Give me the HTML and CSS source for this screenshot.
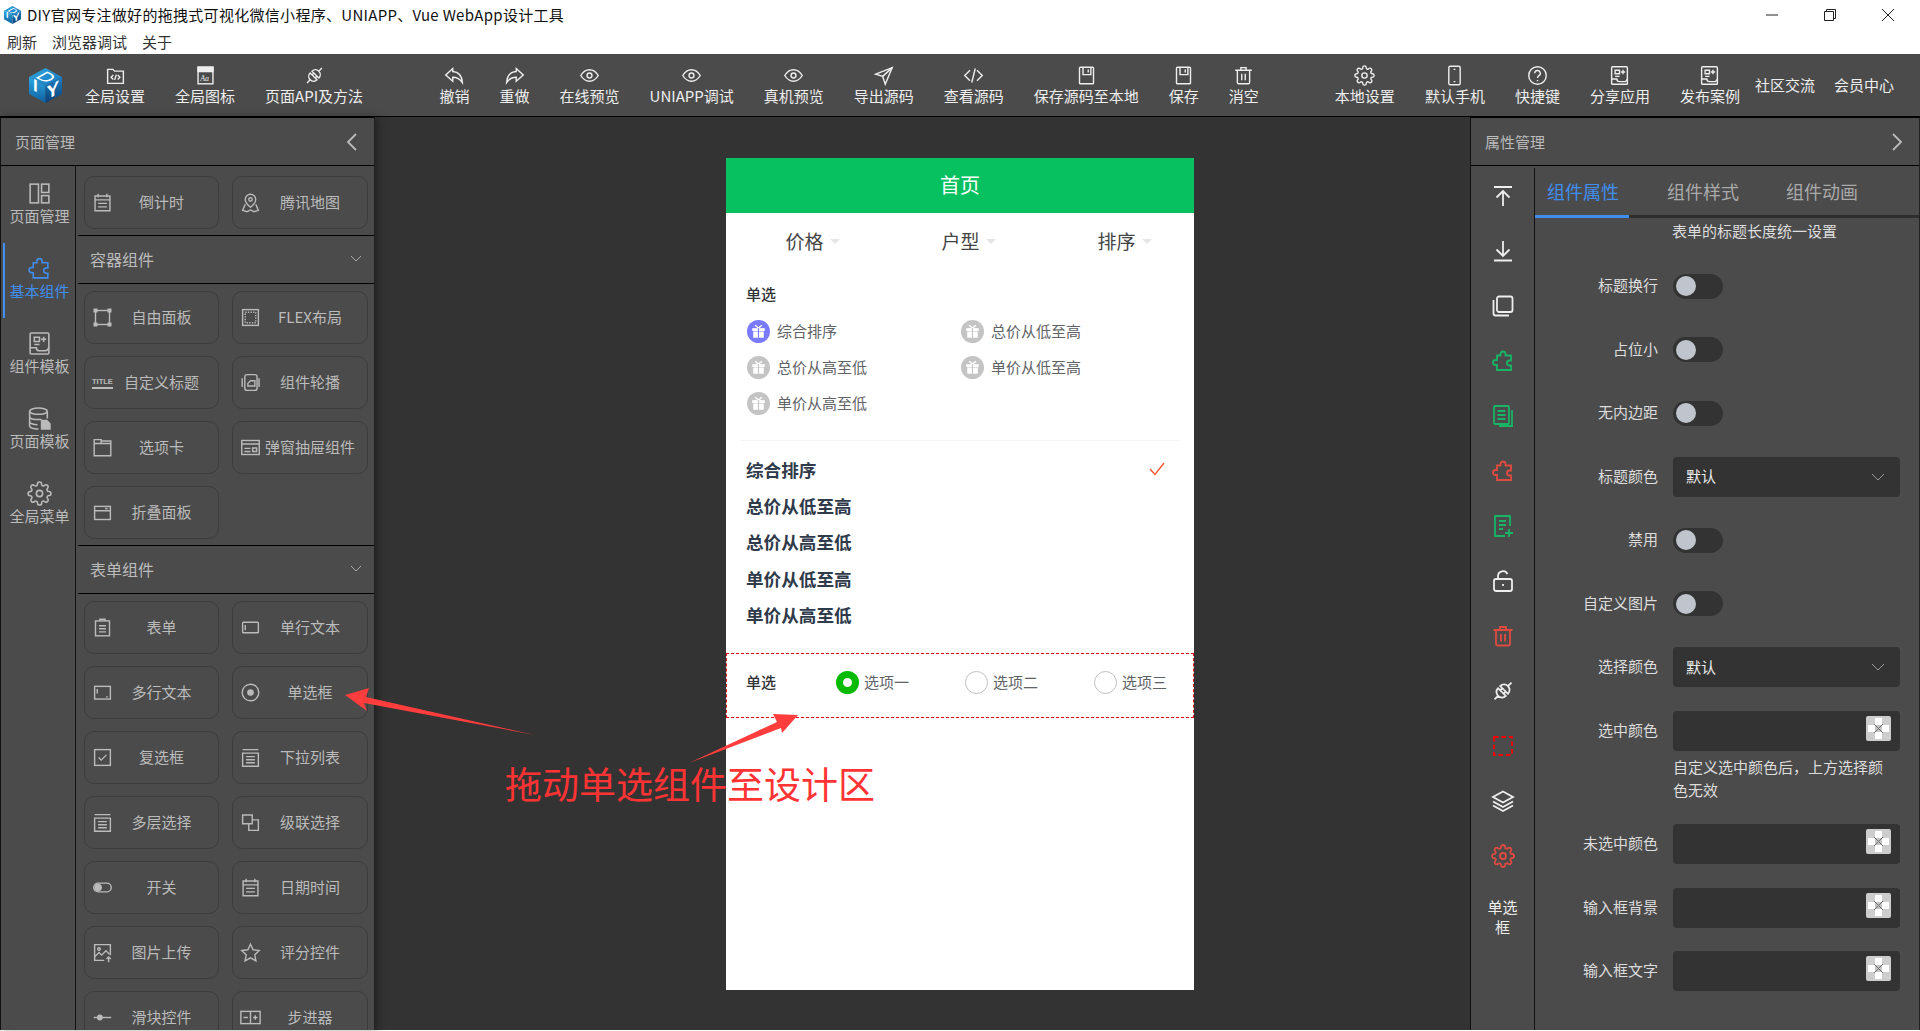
FILE: index.html
```html
<!DOCTYPE html>
<html lang="en">
<head>
    <meta charset="UTF-8">
    <meta name="viewport" content="width=device-width, initial-scale=1.0">
    <title>DIY官网专注做好的拖拽式可视化微信小程序、UNIAPP、Vue WebApp设计工具</title>
    <link rel="stylesheet" href="styles.css">
</head>
<body>
    <svg class="sprite" xmlns="http://www.w3.org/2000/svg">
        <defs>
            <linearGradient id="cubeTop" x1="0" y1="0" x2="1" y2="1"><stop offset="0" stop-color="#2fa6e2"/><stop offset="1" stop-color="#1678bb"/></linearGradient>
            <linearGradient id="cubeLeft" x1="0" y1="0" x2="0" y2="1"><stop offset="0" stop-color="#2ca8e4"/><stop offset="1" stop-color="#0f5f9e"/></linearGradient>
            <linearGradient id="cubeRight" x1="0" y1="0" x2="0" y2="1"><stop offset="0" stop-color="#1b7fc4"/><stop offset="1" stop-color="#0a3f74"/></linearGradient>
        </defs>
        <symbol id="i-folder" viewBox="0 0 24 24"><path d="M3 5h6l2 2h10v14H3z"/><path d="M9.500 11.500L7 14l2.500 2.500M14.500 11.500L17 14l-2.500 2.500M13 11l-2 6"/></symbol>
        <symbol id="i-plug" viewBox="0 0 24 24"><g transform="rotate(-45 12 12)"><path d="M10.500 6.500a5.500 5.500 0 0 0 0 11zM5 12H0M13.500 6.500a5.500 5.500 0 0 1 0 11zM19 12h5M13.500 9.500h-3M13.500 14.500h-3"/></g></symbol>
        <symbol id="i-undo" viewBox="0 0 24 24"><path d="M10 4L2 11.500 10 18.500v-4.500c5 0 8 1.500 11 6-.5-7-4-12-11-12.500z"/></symbol>
        <symbol id="i-redo" viewBox="0 0 24 24"><path d="M14 4l8 7.500-8 7v-4.500c-5 0-8 1.500-11 6 .5-7 4-12 11-12.500z"/></symbol>
        <symbol id="i-eye" viewBox="0 0 24 24"><path d="M2 12s4-6.500 10-6.500S22 12 22 12s-4 6.500-10 6.500S2 12 2 12z"/><circle cx="12" cy="12" r="2.800"/></symbol>
        <symbol id="i-send" viewBox="0 0 24 24"><path d="M22 3L3 10.500l8 2.500 3 9z"/><path d="M22 3L11 13"/></symbol>
        <symbol id="i-code" viewBox="0 0 24 24"><path d="M8 6l-6 6 6 6M16 6l6 6-6 6M14 4l-4 16"/></symbol>
        <symbol id="i-save" viewBox="0 0 24 24"><rect x="4" y="2.500" width="16" height="19" rx="1"/><path d="M8 2.500V11h9V2.500M14 5v3.500"/></symbol>
        <symbol id="i-trash" viewBox="0 0 24 24"><path d="M2.500 6h19M9 6V3h6v3M5 6v14a1.500 1.500 0 0 0 1.500 1.500h11A1.500 1.500 0 0 0 19 20V6M10 10v7.500M14 10v7.500"/></symbol>
        <symbol id="i-gear" viewBox="0 0 24 24"><circle cx="12" cy="12" r="3"/><path d="M19.400 15a1.650 1.650 0 0 0 .33 1.820l.06.06a2 2 0 0 1 0 2.830 2 2 0 0 1-2.830 0l-.06-.06a1.650 1.650 0 0 0-1.820-.33 1.650 1.650 0 0 0-1 1.510V21a2 2 0 0 1-2 2 2 2 0 0 1-2-2v-.09A1.650 1.650 0 0 0 9 19.400a1.650 1.650 0 0 0-1.820.33l-.06.06a2 2 0 0 1-2.830 0 2 2 0 0 1 0-2.830l.06-.06a1.650 1.650 0 0 0 .33-1.820 1.650 1.650 0 0 0-1.510-1H3a2 2 0 0 1-2-2 2 2 0 0 1 2-2h.09A1.650 1.650 0 0 0 4.600 9a1.650 1.650 0 0 0-.33-1.820l-.06-.06a2 2 0 0 1 0-2.830 2 2 0 0 1 2.830 0l.06.06a1.650 1.650 0 0 0 1.820.33H9a1.650 1.650 0 0 0 1-1.510V3a2 2 0 0 1 2-2 2 2 0 0 1 2 2v.09a1.650 1.650 0 0 0 1 1.510 1.650 1.650 0 0 0 1.820-.33l.06-.06a2 2 0 0 1 2.830 0 2 2 0 0 1 0 2.830l-.06.06a1.650 1.650 0 0 0-.33 1.820V9a1.650 1.650 0 0 0 1.510 1H21a2 2 0 0 1 2 2 2 2 0 0 1-2 2h-.09a1.650 1.650 0 0 0-1.510 1z"/></symbol>
        <symbol id="i-phone" viewBox="0 0 24 24"><rect x="5.500" y="1.500" width="13" height="21" rx="1.500"/><path d="M11 5h2M11 19h2"/></symbol>
        <symbol id="i-help" viewBox="0 0 24 24"><circle cx="12" cy="12" r="10"/><path d="M8.800 9.500a3.200 3.200 0 1 1 4.800 2.700c-1 .6-1.600 1.200-1.600 2.600M12 17v1.500"/></symbol>
        <symbol id="i-template" viewBox="0 0 24 24"><rect x="3" y="2" width="18" height="20" rx="1"/><path d="M7 6h5v4H7zM7 13h5M16 5.500v5M13.500 8h5M3 16h6c0 2 1 3 3 3h6c1 0 2-1 3-3"/></symbol>
        <symbol id="i-layout" viewBox="0 0 24 24"><rect x="3" y="3" width="8" height="18"/><rect x="14" y="3" width="7" height="8"/><rect x="14" y="14" width="7" height="7"/></symbol>
        <symbol id="i-puzzle" viewBox="0 0 24 24"><path d="M9.500 5a2.500 2.500 0 0 1 5 0v1.500H20v5h-1.500a2.500 2.500 0 0 0 0 5H20V21H6v-5H4.500a2.500 2.500 0 0 1 0-5H6V6.500h3.500z"/></symbol>
        <symbol id="i-database" viewBox="0 0 24 24"><ellipse cx="11" cy="5" rx="8.500" ry="3"/><path d="M2.500 5v14c0 1.700 3.500 3 8.500 3M2.500 10c0 1.700 3.500 3 8.500 3h3M2.500 15c0 1.700 3.500 3 7.500 3M19.500 5v7"/><path d="M14 14h5l3 3v5h-8z" fill="currentColor"/></symbol>
        <symbol id="i-calendar" viewBox="0 0 24 24"><path d="M3.500 4.500h17v17h-17zM7 2v4M17 2v4M3.500 9h17M7 13h10M7 17h10"/></symbol>
        <symbol id="i-map" viewBox="0 0 24 24"><path d="M12 2.500a6 6 0 0 1 6 6c0 4-6 9-6 9s-6-5-6-9a6 6 0 0 1 6-6z"/><circle cx="12" cy="8.500" r="2"/><path d="M6 14l-3 7 5 1.500 4-2 4 2 5-1.500-3-7"/></symbol>
        <symbol id="i-panel" viewBox="0 0 24 24"><rect x="4" y="4" width="16" height="16"/><path d="M2.500 2.500h3v3h-3zM18.500 2.500h3v3h-3zM2.500 18.500h3v3h-3zM18.500 18.500h3v3h-3z" fill="currentColor"/></symbol>
        <symbol id="i-flex" viewBox="0 0 24 24"><rect x="3" y="3" width="18" height="18"/><rect x="6" y="6" width="12" height="12" stroke-dasharray="1.500 1.500"/></symbol>
        <symbol id="i-carousel" viewBox="0 0 24 24"><rect x="5.500" y="3" width="14" height="18" rx="2.500"/><path d="M2.500 7v10M21.800 7v10M9 13l3-3h5v6H9z"/></symbol>
        <symbol id="i-tab" viewBox="0 0 24 24"><path d="M2.500 7.500h19v14h-19zM2.500 7.500V3h8v4.500M10.500 4.500h11v3"/></symbol>
        <symbol id="i-drawer" viewBox="0 0 24 24"><rect x="2" y="4" width="20" height="16"/><path d="M2 8h20M5 13h7M5 16.500h7M14.500 12.500h4.500v4h-4.500z"/></symbol>
        <symbol id="i-collapse" viewBox="0 0 24 24"><rect x="3" y="5" width="18" height="15"/><path d="M3 10h18M15 7.500h3"/></symbol>
        <symbol id="i-form" viewBox="0 0 24 24"><rect x="4" y="4.500" width="16" height="17"/><path d="M9 4.500V2.500h6v2M8 10h8M8 13.500h8M8 17h8"/></symbol>
        <symbol id="i-input" viewBox="0 0 24 24"><rect x="3" y="6" width="18" height="12" rx="1"/><path d="M6 9v6"/></symbol>
        <symbol id="i-textarea" viewBox="0 0 24 24"><rect x="3" y="5" width="18" height="14.500"/><path d="M6 8v5M18 17h-2"/></symbol>
        <symbol id="i-radio" viewBox="0 0 24 24"><circle cx="12" cy="12" r="9.500"/><circle cx="12" cy="12" r="3" fill="currentColor"/></symbol>
        <symbol id="i-check" viewBox="0 0 24 24"><rect x="3" y="3" width="18" height="18"/><path d="M7.500 12l3 3 6-6"/></symbol>
        <symbol id="i-select" viewBox="0 0 24 24"><path d="M3 3h18M3 7h18v15H3zM7 11h10M7 14.500h10M7 18h10"/></symbol>
        <symbol id="i-cascade" viewBox="0 0 24 24"><path d="M3 3.500h11v10H3z"/><path d="M14 9h7v12H10v-7.500"/></symbol>
        <symbol id="i-switch" viewBox="0 0 24 24"><rect x="2" y="7" width="20" height="10" rx="5"/><circle cx="7" cy="12" r="3.500" fill="currentColor"/></symbol>
        <symbol id="i-upload" viewBox="0 0 24 24"><path d="M14 21H3V3h18v12"/><circle cx="8" cy="8" r="1.500"/><path d="M3 17l5-5 3 3 5-5 4 4M19 23v-6M16.500 19.500L19 17l2.500 2.500"/></symbol>
        <symbol id="i-star" viewBox="0 0 24 24"><polygon points="12,2.500 15,8.900 22,9.800 16.900,14.600 18.200,21.500 12,18.100 5.800,21.500 7.100,14.600 2,9.800 9,8.900"/></symbol>
        <symbol id="i-slider" viewBox="0 0 24 24"><path d="M2 12h20"/><circle cx="9" cy="12" r="2.500" fill="currentColor"/></symbol>
        <symbol id="i-stepper" viewBox="0 0 24 24"><rect x="1" y="5" width="22" height="14"/><path d="M12 5v14M4 12h5M15 12h5M17.500 9.500v5"/></symbol>
        <symbol id="i-top" viewBox="0 0 24 24"><path d="M3 3h18M12 7v15M5.500 13.500L12 7l6.500 6.500"/></symbol>
        <symbol id="i-bottom" viewBox="0 0 24 24"><path d="M12 2v15M5.500 10.500L12 17l6.500-6.500M3 21.500h18"/></symbol>
        <symbol id="i-copy" viewBox="0 0 24 24"><rect x="6" y="2.500" width="15.500" height="15.500" rx="2"/><path d="M2.500 6v13.500a2 2 0 0 0 2 2H18"/></symbol>
        <symbol id="i-docs" viewBox="0 0 24 24"><rect x="3" y="2" width="15" height="18" rx="1"/><path d="M6.500 7h8M6.500 11h8M6.500 15h8M21 6v16H8"/></symbol>
        <symbol id="i-docplus" viewBox="0 0 24 24"><path d="M19 12V2H4v20h10M8 7h7M8 11h7M8 15h4M18 15v8M14 19h8"/></symbol>
        <symbol id="i-unlock" viewBox="0 0 24 24"><rect x="3" y="10" width="18" height="12" rx="2"/><path d="M7 10V7a5 5 0 0 1 9.500-2M12 15v2"/></symbol>
        <symbol id="i-dashed" viewBox="0 0 24 24"><rect x="3" y="3" width="18" height="18" stroke-dasharray="4.500 3"/></symbol>
        <symbol id="i-layers" viewBox="0 0 24 24"><path d="M12 2.500l10 5.500-10 5.500L2 8zM2 12.500L12 18l10-5.500M2 16.500L12 22l10-5.500"/></symbol>
        <symbol id="i-gift" viewBox="0 0 24 24"><circle cx="12" cy="12" r="12" fill="currentColor"/><rect x="5.500" y="8.500" width="13" height="3" fill="#fff"/><rect x="6.500" y="12" width="11" height="6.500" fill="#fff"/><path d="M8.500 5.500l3.500 3 3.500-3" fill="none" stroke="#fff" stroke-width="1.500"/><path d="M12 8.500v10" stroke="currentColor" stroke-width="1.200"/></symbol>
        <symbol id="i-nocolor" viewBox="0 0 25 25"><rect width="25" height="25" fill="#cdcdcd"/><path d="M9 2h7v7h7v7h-7v7H9v-7H2V9h7z" fill="#fff"/><rect x="9" y="9" width="7" height="7" fill="#c4c4c4"/><path d="M8 8l9 9M17 8l-9 9" stroke="#6f6f6f" stroke-width="1" fill="none"/></symbol>
    </svg>

    <div class="titlebar">
        <svg class="title-logo" viewBox="0 0 37 37">
            <polygon points="18.5,1 35,10 18.5,19 2,10" fill="url(#cubeTop)"/>
            <polygon points="2,10 18.5,19 18.5,36 2,27" fill="url(#cubeLeft)"/>
            <polygon points="35,10 18.5,19 18.5,36 35,27" fill="url(#cubeRight)"/>
            <text transform="matrix(1.1 .6 -1.1 .6 7.500 10)" font-size="15" font-family="Liberation Sans" fill="#fff">D</text>
            <text transform="matrix(1 .55 0 1 6 23)" font-size="17" font-weight="700" font-family="Liberation Sans" fill="#fff">I</text>
            <text transform="matrix(1 -.55 0 1 19.500 33)" font-size="19" font-weight="700" font-family="Liberation Sans" fill="#fff">Y</text>
        </svg>
        <span class="title-text">DIY官网专注做好的拖拽式可视化微信小程序、UNIAPP、Vue WebApp设计工具</span>
        <div class="win-btns">
            <svg class="win-btn" viewBox="0 0 14 14"><path d="M1 7h12"/></svg>
            <svg class="win-btn" viewBox="0 0 14 14"><path d="M1.500 3.500h9v9h-9zM3.500 3.500v-2h9v9h-2"/></svg>
            <svg class="win-btn" viewBox="0 0 14 14"><path d="M1 1l12 12M13 1L1 13"/></svg>
        </div>
    </div>

    <div class="menubar">
        <span>刷新</span>
        <span>浏览器调试</span>
        <span>关于</span>
    </div>

    <div class="toolbar">
        <svg class="logo" viewBox="0 0 37 37">
            <polygon points="18.5,1 35,10 18.5,19 2,10" fill="url(#cubeTop)"/>
            <polygon points="2,10 18.5,19 18.5,36 2,27" fill="url(#cubeLeft)"/>
            <polygon points="35,10 18.5,19 18.5,36 35,27" fill="url(#cubeRight)"/>
            <text transform="matrix(1.1 .6 -1.1 .6 7.500 10)" font-size="15" font-family="Liberation Sans" fill="#fff">D</text>
            <text transform="matrix(1 .55 0 1 6 23)" font-size="17" font-weight="700" font-family="Liberation Sans" fill="#fff">I</text>
            <text transform="matrix(1 -.55 0 1 19.500 33)" font-size="19" font-weight="700" font-family="Liberation Sans" fill="#fff">Y</text>
        </svg>
        <div class="tool-group first">
            <div class="tool"><svg class="icon"><use href="#i-folder"/></svg><span>全局设置</span></div>
            <div class="tool">
                <svg class="icon" viewBox="0 0 24 24">
                    <rect x="3.500" y="2.500" width="17" height="19"/>
                    <rect x="3.500" y="2.500" width="17" height="5" fill="currentColor"/>
                    <text x="6" y="18" font-size="9" font-style="italic" font-family="Liberation Serif" fill="currentColor" stroke="none">Aa</text>
                </svg>
                <span>全局图标</span>
            </div>
            <div class="tool"><svg class="icon"><use href="#i-plug"/></svg><span>页面API及方法</span></div>
        </div>
        <div class="tool-group second">
            <div class="tool"><svg class="icon"><use href="#i-undo"/></svg><span>撤销</span></div>
            <div class="tool"><svg class="icon"><use href="#i-redo"/></svg><span>重做</span></div>
            <div class="tool"><svg class="icon"><use href="#i-eye"/></svg><span>在线预览</span></div>
            <div class="tool"><svg class="icon"><use href="#i-eye"/></svg><span>UNIAPP调试</span></div>
            <div class="tool"><svg class="icon"><use href="#i-eye"/></svg><span>真机预览</span></div>
            <div class="tool"><svg class="icon"><use href="#i-send"/></svg><span>导出源码</span></div>
            <div class="tool"><svg class="icon"><use href="#i-code"/></svg><span>查看源码</span></div>
            <div class="tool"><svg class="icon"><use href="#i-save"/></svg><span>保存源码至本地</span></div>
            <div class="tool"><svg class="icon"><use href="#i-save"/></svg><span>保存</span></div>
            <div class="tool"><svg class="icon"><use href="#i-trash"/></svg><span>消空</span></div>
        </div>
        <div class="tool-group third">
            <div class="tool"><svg class="icon"><use href="#i-gear"/></svg><span>本地设置</span></div>
            <div class="tool"><svg class="icon"><use href="#i-phone"/></svg><span>默认手机</span></div>
            <div class="tool"><svg class="icon"><use href="#i-help"/></svg><span>快捷键</span></div>
            <div class="tool"><svg class="icon"><use href="#i-template"/></svg><span>分享应用</span></div>
            <div class="tool"><svg class="icon"><use href="#i-template"/></svg><span>发布案例</span></div>
        </div>
        <div class="tool-links">
            <span>社区交流</span>
            <span>会员中心</span>
        </div>
    </div>

    <div class="workspace">
        <div class="side-panel left-panel">
            <div class="panel-head">
                <span>页面管理</span>
                <svg class="head-arrow" viewBox="0 0 12 20"><path d="M10 2L2 10l8 8"/></svg>
            </div>
            <div class="panel-body">
                <div class="left-rail">
                    <div class="rail-item"><svg class="rail-icon"><use href="#i-layout"/></svg><span>页面管理</span></div>
                    <div class="rail-item active"><svg class="rail-icon"><use href="#i-puzzle"/></svg><span>基本组件</span></div>
                    <div class="rail-item"><svg class="rail-icon"><use href="#i-template"/></svg><span>组件模板</span></div>
                    <div class="rail-item"><svg class="rail-icon"><use href="#i-database"/></svg><span>页面模板</span></div>
                    <div class="rail-item"><svg class="rail-icon"><use href="#i-gear"/></svg><span>全局菜单</span></div>
                </div>
                <div class="comp-list">
                    <div class="comp-grid top-grid">
                        <div class="comp-btn"><svg class="comp-icon"><use href="#i-calendar"/></svg><span>倒计时</span></div>
                        <div class="comp-btn"><svg class="comp-icon"><use href="#i-map"/></svg><span>腾讯地图</span></div>
                    </div>
                    <div class="comp-head"><span>容器组件</span><svg class="comp-chevron" viewBox="0 0 12 7"><path d="M1 1l5 5 5-5"/></svg></div>
                    <div class="comp-grid">
                        <div class="comp-btn"><svg class="comp-icon"><use href="#i-panel"/></svg><span>自由面板</span></div>
                        <div class="comp-btn"><svg class="comp-icon"><use href="#i-flex"/></svg><span>FLEX布局</span></div>
                        <div class="comp-btn"><b class="title-mark">TITLE</b><span>自定义标题</span></div>
                        <div class="comp-btn"><svg class="comp-icon"><use href="#i-carousel"/></svg><span>组件轮播</span></div>
                        <div class="comp-btn"><svg class="comp-icon"><use href="#i-tab"/></svg><span>选项卡</span></div>
                        <div class="comp-btn"><svg class="comp-icon"><use href="#i-drawer"/></svg><span>弹窗抽屉组件</span></div>
                        <div class="comp-btn"><svg class="comp-icon"><use href="#i-collapse"/></svg><span>折叠面板</span></div>
                    </div>
                    <div class="comp-head"><span>表单组件</span><svg class="comp-chevron" viewBox="0 0 12 7"><path d="M1 1l5 5 5-5"/></svg></div>
                    <div class="comp-grid">
                        <div class="comp-btn"><svg class="comp-icon"><use href="#i-form"/></svg><span>表单</span></div>
                        <div class="comp-btn"><svg class="comp-icon"><use href="#i-input"/></svg><span>单行文本</span></div>
                        <div class="comp-btn"><svg class="comp-icon"><use href="#i-textarea"/></svg><span>多行文本</span></div>
                        <div class="comp-btn"><svg class="comp-icon"><use href="#i-radio"/></svg><span>单选框</span></div>
                        <div class="comp-btn"><svg class="comp-icon"><use href="#i-check"/></svg><span>复选框</span></div>
                        <div class="comp-btn"><svg class="comp-icon"><use href="#i-select"/></svg><span>下拉列表</span></div>
                        <div class="comp-btn"><svg class="comp-icon"><use href="#i-select"/></svg><span>多层选择</span></div>
                        <div class="comp-btn"><svg class="comp-icon"><use href="#i-cascade"/></svg><span>级联选择</span></div>
                        <div class="comp-btn"><svg class="comp-icon"><use href="#i-switch"/></svg><span>开关</span></div>
                        <div class="comp-btn"><svg class="comp-icon"><use href="#i-calendar"/></svg><span>日期时间</span></div>
                        <div class="comp-btn"><svg class="comp-icon"><use href="#i-upload"/></svg><span>图片上传</span></div>
                        <div class="comp-btn"><svg class="comp-icon"><use href="#i-star"/></svg><span>评分控件</span></div>
                        <div class="comp-btn"><svg class="comp-icon"><use href="#i-slider"/></svg><span>滑块控件</span></div>
                        <div class="comp-btn"><svg class="comp-icon"><use href="#i-stepper"/></svg><span>步进器</span></div>
                    </div>
                </div>
            </div>
        </div>

        <div class="canvas">
            <div class="phone">
                <div class="phone-title">首页</div>
                <div class="filter-row">
                    <div class="filter"><span>价格</span><i class="caret"></i></div>
                    <div class="filter"><span>户型</span><i class="caret"></i></div>
                    <div class="filter"><span>排序</span><i class="caret"></i></div>
                </div>
                <div class="picker-label">单选</div>
                <div class="picker">
                    <div class="pick active"><svg class="gift"><use href="#i-gift"/></svg><span>综合排序</span></div>
                    <div class="pick"><svg class="gift"><use href="#i-gift"/></svg><span>总价从低至高</span></div>
                    <div class="pick"><svg class="gift"><use href="#i-gift"/></svg><span>总价从高至低</span></div>
                    <div class="pick"><svg class="gift"><use href="#i-gift"/></svg><span>单价从低至高</span></div>
                    <div class="pick"><svg class="gift"><use href="#i-gift"/></svg><span>单价从高至低</span></div>
                </div>
                <div class="sort-list">
                    <div class="sort-item"><span>综合排序</span><svg class="sort-check" viewBox="0 0 16 14"><path d="M1 7l5 5.500L15 1"/></svg></div>
                    <div class="sort-item"><span>总价从低至高</span></div>
                    <div class="sort-item"><span>总价从高至低</span></div>
                    <div class="sort-item"><span>单价从低至高</span></div>
                    <div class="sort-item"><span>单价从高至低</span></div>
                </div>
                <div class="drop-box">
                    <span class="drop-label">单选</span>
                    <div class="radio checked"><i></i><span>选项一</span></div>
                    <div class="radio"><i></i><span>选项二</span></div>
                    <div class="radio"><i></i><span>选项三</span></div>
                </div>
            </div>
        </div>

        <div class="side-panel right-panel">
            <div class="panel-head">
                <span>属性管理</span>
                <svg class="head-arrow" viewBox="0 0 12 20"><path d="M2 2l8 8-8 8"/></svg>
            </div>
            <div class="panel-body">
                <div class="right-rail">
                    <div class="tool-cell"><svg class="cell-icon"><use href="#i-top"/></svg></div>
                    <div class="tool-cell"><svg class="cell-icon"><use href="#i-bottom"/></svg></div>
                    <div class="tool-cell"><svg class="cell-icon"><use href="#i-copy"/></svg></div>
                    <div class="tool-cell green"><svg class="cell-icon"><use href="#i-puzzle"/></svg></div>
                    <div class="tool-cell green"><svg class="cell-icon"><use href="#i-docs"/></svg></div>
                    <div class="tool-cell red"><svg class="cell-icon"><use href="#i-puzzle"/></svg></div>
                    <div class="tool-cell green"><svg class="cell-icon"><use href="#i-docplus"/></svg></div>
                    <div class="tool-cell"><svg class="cell-icon"><use href="#i-unlock"/></svg></div>
                    <div class="tool-cell red"><svg class="cell-icon"><use href="#i-trash"/></svg></div>
                    <div class="tool-cell"><svg class="cell-icon"><use href="#i-plug"/></svg></div>
                    <div class="tool-cell pure-red"><svg class="cell-icon"><use href="#i-dashed"/></svg></div>
                    <div class="tool-cell"><svg class="cell-icon"><use href="#i-layers"/></svg></div>
                    <div class="tool-cell red"><svg class="cell-icon"><use href="#i-gear"/></svg></div>
                    <div class="rail-name">单选框</div>
                </div>
                <div class="props">
                    <div class="prop-tabs">
                        <div class="prop-tab active">组件属性</div>
                        <div class="prop-tab">组件样式</div>
                        <div class="prop-tab">组件动画</div>
                    </div>
                    <div class="prop-note">表单的标题长度统一设置</div>
                    <div class="prop-row"><label>标题换行</label><i class="toggle"></i></div>
                    <div class="prop-row"><label>占位小</label><i class="toggle"></i></div>
                    <div class="prop-row"><label>无内边距</label><i class="toggle"></i></div>
                    <div class="prop-row"><label>标题颜色</label><div class="prop-box"><span>默认</span><svg class="box-chevron" viewBox="0 0 14 8"><path d="M1 1l6 6 6-6"/></svg></div></div>
                    <div class="prop-row"><label>禁用</label><i class="toggle"></i></div>
                    <div class="prop-row"><label>自定义图片</label><i class="toggle"></i></div>
                    <div class="prop-row"><label>选择颜色</label><div class="prop-box"><span>默认</span><svg class="box-chevron" viewBox="0 0 14 8"><path d="M1 1l6 6 6-6"/></svg></div></div>
                    <div class="prop-row"><label>选中颜色</label><div class="prop-box"><svg class="no-color"><use href="#i-nocolor"/></svg></div></div>
                    <div class="prop-tip">自定义选中颜色后，上方选择颜色无效</div>
                    <div class="prop-row"><label>未选中颜色</label><div class="prop-box"><svg class="no-color"><use href="#i-nocolor"/></svg></div></div>
                    <div class="prop-row"><label>输入框背景</label><div class="prop-box"><svg class="no-color"><use href="#i-nocolor"/></svg></div></div>
                    <div class="prop-row"><label>输入框文字</label><div class="prop-box"><svg class="no-color"><use href="#i-nocolor"/></svg></div></div>
                </div>
            </div>
        </div>
    </div>

    <!-- tutorial markup drawn over the screenshot -->
    <svg class="callout-arrows" viewBox="0 0 1920 1031">
        <polygon points="345,695 369,688 366,697 535,735 364,703 367,711"/>
        <polygon points="798,715 773,714 777,722 689,763 781,728 782,733"/>
    </svg>
    <div class="callout-text">拖动单选组件至设计区</div>
</body>
</html>
```

FILE: styles.css
```css
* {
    box-sizing: border-box;
}
html, body {
    margin: 0;
    height: 100%;
}
body {
    position: relative;
    display: flex;
    flex-direction: column;
    height: 1031px;
    overflow: hidden;
    background-color: #fff;
    color: #222;
    font-family: "Noto Sans CJK SC", "Noto Sans", sans-serif;
    font-size: 15px;
}
.sprite {
    position: absolute;
    width: 0;
    height: 0;
}
svg symbol {
    overflow: visible;
}

/* window chrome */
.titlebar {
    display: flex;
    align-items: center;
    height: 30px;
    padding-left: 3px;
}
.title-logo {
    width: 19px;
    height: 20px;
    margin-right: 5px;
}
.title-text {
    color: #111;
    letter-spacing: 0.3px;
    line-height: 28px;
}
.win-btns {
    display: flex;
    margin-left: auto;
    margin-right: 25px;
    gap: 44px;
}
.win-btn {
    width: 14px;
    height: 14px;
    fill: none;
    stroke: #222;
    stroke-width: 1;
}
.menubar {
    display: flex;
    gap: 15px;
    height: 24px;
    padding-left: 7px;
    line-height: 23px;
    color: #333;
}

/* toolbar */
.toolbar {
    display: flex;
    align-items: flex-start;
    height: 63px;
    padding-left: 27px;
    background-color: #4b4b4b;
    border-bottom: 1px solid #000;
    color: #eee;
}
.logo {
    width: 37px;
    height: 37px;
    margin-top: 13px;
}
.tool-group {
    display: flex;
    gap: 30px;
    padding-top: 12px;
}
.tool-group.first { margin-left: 21px; }
.tool-group.second { margin-left: 76.5px; }
.tool-group.third { margin-left: 76px; }
.tool {
    display: flex;
    flex-direction: column;
    align-items: center;
    line-height: 20px;
    white-space: nowrap;
}
.icon {
    width: 21px;
    height: 21px;
    margin-top: -1px;
    fill: none;
    stroke: currentColor;
    stroke-width: 1.6;
}
.tool-links {
    display: flex;
    gap: 19px;
    margin-left: 15px;
    line-height: 62px;
}

/* panels */
.workspace {
    display: flex;
    height: 913px;
    background-color: #333;
}
.side-panel {
    display: flex;
    flex-direction: column;
    position: relative;
    height: 913px;
    background-color: #4b4b4b;
    border-top: 1px solid #000;
    color: #bbb;
}
.left-panel {
    width: 375px;
    border-left: 1px solid #111;
    border-right: 1px solid #222;
    box-shadow: 3px 0 8px rgba(0,0,0,0.35);
}
.right-panel {
    width: 450px;
    margin-left: auto;
    border-left: 1px solid #111;
    border-right: 1px solid #222;
}
.panel-head {
    display: flex;
    align-items: center;
    justify-content: space-between;
    height: 48px;
    padding: 0 16px 0 14px;
    border-bottom: 1px solid #000;
}
.head-arrow {
    width: 12px;
    height: 20px;
    fill: none;
    stroke: #bbb;
    stroke-width: 1.8;
}
.panel-body {
    display: flex;
    flex: 1;
    min-height: 0;
}

/* left rail */
.left-rail {
    width: 75px;
    padding-top: 2px;
    border-right: 1px solid #111;
}
.rail-item {
    position: relative;
    display: flex;
    flex-direction: column;
    align-items: center;
    height: 75px;
    padding: 13px 0 0 3px;
    line-height: 20px;
}
.rail-item.active {
    color: #3f8ef0;
}
.rail-item.active::before {
    content: "";
    position: absolute;
    top: 0;
    left: 2px;
    width: 2px;
    height: 75px;
    background-color: #3f8ef0;
}
.rail-icon {
    flex: none;
    width: 25px;
    height: 25px;
    fill: none;
    stroke: currentColor;
    stroke-width: 1.5;
}

/* component list */
.comp-list {
    flex: 1;
    overflow: hidden;
}
.comp-grid {
    display: grid;
    grid-template-columns: 135px 136px;
    grid-auto-rows: 53px;
    gap: 12px 13px;
    padding: 7px 0 6px 8px;
}
.top-grid {
    padding-top: 10px;
}
.comp-btn {
    display: flex;
    align-items: center;
    padding: 0 8px 2px 7px;
    border: 1px solid #3c3c3c;
    border-radius: 10px;
}
.comp-btn span {
    flex: 1;
    text-align: center;
    white-space: nowrap;
}
.comp-icon {
    flex: none;
    width: 21px;
    height: 21px;
    margin-top: 2px;
    fill: none;
    stroke: currentColor;
    stroke-width: 1.6;
}
.title-mark {
    flex: none;
    width: 21px;
    margin-top: 2px;
    padding-bottom: 1px;
    border-bottom: 2px solid #bbb;
    font-family: "Liberation Sans", sans-serif;
    font-size: 7.5px;
    line-height: 9px;
}
.comp-head {
    display: flex;
    align-items: center;
    justify-content: space-between;
    height: 49px;
    margin-left: 2px;
    padding: 0 12px 2px 12px;
    border-top: 1px solid #000;
    border-bottom: 1px solid #000;
    font-size: 16px;
}
.comp-chevron {
    width: 12px;
    height: 7px;
    fill: none;
    stroke: #aaa;
    stroke-width: 1;
}

/* phone preview */
.canvas {
    padding: 41px 0 0 351px;
}
.phone {
    width: 468px;
    height: 832px;
    background-color: #fff;
    color: #606266;
}
.phone-title {
    height: 55px;
    background-color: #07c160;
    color: #fff;
    font-size: 20px;
    line-height: 53px;
    text-align: center;
}
.filter-row {
    display: flex;
    height: 58px;
}
.filter {
    display: flex;
    flex: 1;
    align-items: center;
    justify-content: center;
    gap: 6px;
    padding: 0 0 4px 17px;
    color: #444;
    font-size: 19px;
}
.caret {
    width: 0;
    height: 0;
    margin-top: 3px;
    border-left: 5px solid transparent;
    border-right: 5px solid transparent;
    border-top: 5px solid #e5e5e5;
}
.picker-label {
    margin-top: 11px;
    padding-left: 20px;
    color: #303133;
    font-weight: 500;
    line-height: 24px;
}
.picker {
    display: grid;
    grid-template-columns: 214px 1fr;
    grid-auto-rows: 36px;
    margin: 7px 14px 0 15px;
    padding: 0 0 19px 6px;
    border-bottom: 1px solid #f5f5f5;
}
.pick {
    display: flex;
    align-items: center;
    gap: 7px;
    line-height: 20px;
}
.pick span {
    margin-top: -1px;
}
.gift {
    width: 23px;
    height: 23px;
    color: #c4c4c4;
}
.pick.active .gift {
    color: #7a7aff;
}
.sort-list {
    margin-top: 10px;
    padding: 0 29px 0 20px;
}
.sort-item {
    display: flex;
    align-items: center;
    justify-content: space-between;
    height: 36.3px;
    color: #2f3a4a;
    font-size: 17.6px;
    font-weight: 700;
}
.sort-check {
    width: 16px;
    height: 14px;
    fill: none;
    stroke: #f5522d;
    stroke-width: 1.3;
}
.drop-box {
    display: flex;
    align-items: flex-start;
    height: 65px;
    margin-top: 21px;
    padding: 17px 0 0 19px;
    border: 1px dashed #e60012;
}
.drop-label {
    flex: none;
    width: 90px;
    color: #303133;
    font-weight: 500;
    line-height: 21px;
}
.radio {
    flex: none;
    display: flex;
    align-items: center;
    gap: 5px;
    width: 129px;
    line-height: 21px;
}
.radio span {
    margin-top: -2px;
}
.radio i {
    flex: none;
    width: 23px;
    height: 23px;
    border: 1px solid #c0c0c0;
    border-radius: 50%;
}
.radio.checked i {
    border: 7px solid #09bb07;
}

/* right panel */
.right-rail {
    flex: none;
    width: 64px;
    margin-top: 2px;
    border-right: 1px solid #111;
    color: #eee;
}
.tool-cell {
    display: flex;
    align-items: center;
    justify-content: center;
    height: 55px;
}
.tool-cell.green { color: #18b566; }
.tool-cell.red { color: #e04a3f; }
.tool-cell.pure-red { color: #f00; }
.cell-icon {
    width: 24px;
    height: 24px;
    fill: none;
    stroke: currentColor;
    stroke-width: 1.8;
}
.rail-name {
    width: 30px;
    margin: 14px auto 0;
    line-height: 20px;
    text-align: center;
}
.props {
    flex: 1;
    color: #ddd;
}
.prop-tabs {
    display: flex;
    height: 50px;
    margin-top: 2px;
    border-bottom: 3px solid #2e2e2e;
}
.prop-tab {
    height: 50px;
    margin-right: 25px;
    padding: 0 10px 0 12px;
    color: #aaa;
    font-size: 18px;
    line-height: 47px;
}
.prop-tab.active {
    margin-right: 26px;
    color: #3f8ef0;
    border-bottom: 3px solid #3f8ef0;
}
.prop-note {
    height: 26px;
    margin-bottom: 22px;
    padding-left: 137px;
    line-height: 26px;
}
.prop-row {
    display: flex;
    align-items: center;
    height: 40px;
    margin-bottom: 23.5px;
}
.prop-row label {
    flex: none;
    width: 123px;
    margin: -3px 15px 0 0;
    text-align: right;
}
.toggle {
    position: relative;
    width: 50px;
    height: 25px;
    border-radius: 13px;
    background-color: #333;
}
.toggle::after {
    content: "";
    position: absolute;
    top: 2.5px;
    left: 2.5px;
    width: 20px;
    height: 20px;
    border-radius: 50%;
    background-color: #c0c4cc;
}
.prop-box {
    display: flex;
    align-items: center;
    justify-content: space-between;
    width: 227px;
    height: 40px;
    padding: 0 15px 2px 13px;
    border-radius: 4px;
    background-color: #333;
    color: #eee;
}
.no-color {
    width: 25px;
    height: 25px;
    margin: -3px -6px 0 auto;
    border-radius: 2px;
}
.box-chevron {
    width: 14px;
    height: 8px;
    margin-top: 2px;
    fill: none;
    stroke: #999;
    stroke-width: 1;
}
.prop-tip {
    width: 215px;
    margin: -19px 0 23px 138px;
    line-height: 23px;
}

/* tutorial overlay */
.callout-arrows {
    position: absolute;
    top: 0;
    left: 0;
    width: 1920px;
    height: 1031px;
    fill: #ff3d3d;
    pointer-events: none;
}
.callout-text {
    position: absolute;
    top: 759.5px;
    left: 505px;
    color: #f33;
    font-size: 37px;
    line-height: 46px;
    white-space: nowrap;
}
```
